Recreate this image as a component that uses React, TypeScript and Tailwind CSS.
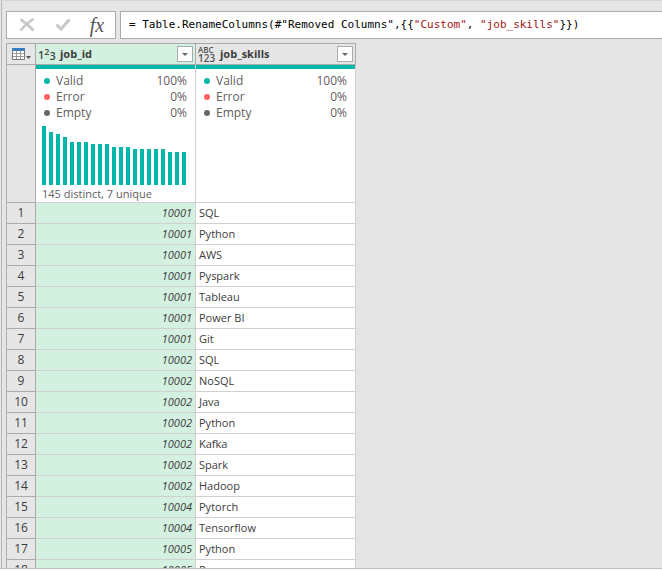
import React from "react";

const profile = [
  { label: "Valid", value: "100%", dot: "bg-[#01b8aa]" },
  { label: "Error", value: "0%", dot: "bg-[#fd625e]" },
  { label: "Empty", value: "0%", dot: "bg-[#666666]" },
];

const bars = [59, 53, 51, 48, 43, 43, 43, 41, 41, 41, 38, 38, 38, 36, 36, 36, 36, 36, 33, 33, 33];

const rows: [number, string][] = [
  [10001, "SQL"],
  [10001, "Python"],
  [10001, "AWS"],
  [10001, "Pyspark"],
  [10001, "Tableau"],
  [10001, "Power BI"],
  [10001, "Git"],
  [10002, "SQL"],
  [10002, "NoSQL"],
  [10002, "Java"],
  [10002, "Python"],
  [10002, "Kafka"],
  [10002, "Spark"],
  [10002, "Hadoop"],
  [10004, "Pytorch"],
  [10004, "Tensorflow"],
  [10005, "Python"],
  [10005, "R"],
];

const formulaParts = [
  { text: '= Table.RenameColumns(#"Removed Columns",{{', color: "text-black" },
  { text: '"Custom"', color: "text-[#a31515]" },
  { text: ", ", color: "text-black" },
  { text: '"job_skills"', color: "text-[#a31515]" },
  { text: "}})", color: "text-black" },
];

function FormulaBar() {
  return (
    <div className="flex h-7 shrink-0 gap-1 pl-1">
      <div className="flex w-[110px] shrink-0 items-center justify-between border border-[#ababab] bg-white pr-2 pl-3">
        <button type="button" aria-label="Cancel" disabled>
          <svg width="16" height="14" viewBox="0 0 16 14" fill="none" stroke="#c8c8c8">
            <path d="M1.5 1.5C6 4 10 8 14.500 12.500" strokeWidth="3" />
            <path d="M14.500 1C9.500 4 5.500 8 1.500 12.500" strokeWidth="2.600" />
          </svg>
        </button>
        <button type="button" aria-label="Apply" disabled className="pl-1">
          <svg width="16" height="14" viewBox="0 0 16 14" fill="none" stroke="#c8c8c8">
            <path d="M1.500 6.500L6 11L14.500 1.500" strokeWidth="3" />
          </svg>
        </button>
        <button
          type="button"
          aria-label="Insert step"
          className="w-5 font-['Liberation_Serif',serif] text-[20px] leading-6 text-[#555555] italic"
        >
          fx
        </button>
      </div>
      <div className="relative min-w-0 grow border border-r-0 border-[#ababab] bg-white font-['DejaVu_Sans_Mono',monospace] text-[11px] leading-[26px]">
        <div aria-hidden="true" className="overflow-hidden pl-2 whitespace-pre">
          {formulaParts.map((part) => (
            <span key={part.text} className={part.color}>
              {part.text}
            </span>
          ))}
        </div>
        <input
          aria-label="Formula"
          defaultValue={formulaParts.map((part) => part.text).join("")}
          spellCheck={false}
          className="absolute inset-0 w-full bg-transparent pl-2 text-transparent caret-black outline-none"
        />
      </div>
    </div>
  );
}

function FilterButton({ column }: { column: string }) {
  return (
    <button
      type="button"
      aria-label={`Filter ${column}`}
      className="flex size-4 shrink-0 items-center justify-center border border-[#ababab] bg-white"
    >
      <svg width="6" height="3" viewBox="0 0 6 3" fill="#666666">
        <path d="M0 0H6L3 3Z" />
      </svg>
    </button>
  );
}

function WholeNumberIcon() {
  return (
    <span className="flex h-5 w-[18px] shrink-0 items-start text-[11px] leading-4 font-semibold text-[#444444]">
      <span className="pt-[3px]">1</span>
      <span className="text-[9px]">2</span>
      <span className="pt-1">3</span>
    </span>
  );
}

function AnyTypeIcon() {
  return (
    <span className="flex w-[18px] shrink-0 flex-col text-left text-[#555555]">
      <span className="text-[8px] leading-[9px] font-semibold">ABC</span>
      <span className="text-[10px] leading-[9px] font-semibold">123</span>
    </span>
  );
}

function ColumnHeader({ name, icon, selected }: { name: string; icon: React.ReactNode; selected?: boolean }) {
  return (
    <th
      scope="col"
      className={`h-[22px] border-y border-r border-[#ababab] p-0 ${selected ? "bg-[#d3f0e0]" : "bg-[#e6e6e6]"}`}
    >
      <div className="flex h-5 items-center gap-1 px-[2px]">
        {icon}
        <span className="grow text-left text-[11px] leading-5 font-bold">{name}</span>
        <FilterButton column={name} />
      </div>
    </th>
  );
}

function ColumnProfile({ distribution }: { distribution?: boolean }) {
  return (
    <td className="h-[138px] border-r border-b border-[#d0d0d0] bg-white p-0 align-top text-[#606060]">
      <div className="h-1 bg-[#01b8aa]" />
      <dl className="px-2 pt-1 text-[12px] leading-4">
        {profile.map((item) => (
          <div key={item.label} className="flex items-center gap-[6px]">
            <span className={`size-[6px] rounded-full ${item.dot}`} />
            <dt className="grow">{item.label}</dt>
            <dd>{item.value}</dd>
          </div>
        ))}
      </dl>
      {distribution && (
        <div className="px-[6px] pt-1">
          <div className="flex h-[60px] items-end gap-[3px]">
            {bars.map((height, i) => (
              <div key={i} className="w-1 bg-[#01b8aa]" style={{ height }} />
            ))}
          </div>
          <p className="text-[11px] leading-[17px]">145 distinct, 7 unique</p>
        </div>
      )}
    </td>
  );
}

export default function App() {
  return (
    <div className="flex h-screen flex-col bg-[#f5f5f5] pb-px font-['Open_Sans','Noto_Sans',sans-serif] text-[#3c3c3c]">
      <div className="min-h-0 grow border-t border-b border-t-[#d6d6d6] border-b-[#c0c0c0] bg-[#e5e5e5] pl-px">
        <main className="flex h-full flex-col overflow-hidden border-l border-[#b8b8b8] pt-[10px]">
          <FormulaBar />
          <div className="min-h-0 grow overflow-hidden pt-1 pl-1">
            <table className="w-[350px] table-fixed border-separate border-spacing-0 border-l border-[#ababab]">
              <colgroup>
                <col className="w-[29px]" />
                <col className="w-[160px]" />
                <col className="w-[160px]" />
              </colgroup>
              <thead>
                <tr>
                  <th className="border-y border-r border-[#ababab] bg-[#e6e6e6] p-0">
                    <button type="button" aria-label="Table options" className="flex h-5 w-full items-center pl-1">
                      <svg width="22" height="14" viewBox="0 0 22 14">
                        <path d="M1.500 1.500H13.500V12.500H1.500Z" fill="#ffffff" stroke="#777777" />
                        <path d="M2 6.500H13M2 9.500H13M5.500 4V12M9.500 4V12" stroke="#999999" />
                        <path d="M1 1H14V4H1Z" fill="#3b7bbf" />
                        <path d="M15 9H20L17.500 12Z" fill="#555555" />
                      </svg>
                    </button>
                  </th>
                  <ColumnHeader name="job_id" icon={<WholeNumberIcon />} selected />
                  <ColumnHeader name="job_skills" icon={<AnyTypeIcon />} />
                </tr>
              </thead>
              <tbody>
                <tr>
                  <td className="border-r border-b border-[#ababab] bg-[#e6e6e6] p-0" />
                  <ColumnProfile distribution />
                  <ColumnProfile />
                </tr>
                {rows.map(([id, skill], i) => (
                  <tr key={i}>
                    <th
                      scope="row"
                      className="h-[21px] border-r border-b border-[#ababab] bg-[#e6e6e6] p-0 text-center text-[12px] leading-5 font-normal"
                    >
                      {i + 1}
                    </th>
                    <td className="border-r border-b border-[#d0d0d0] bg-[#d3f0e0] p-0 pr-[3px] text-right text-[11px] leading-5 italic">
                      {id}
                    </td>
                    <td className="border-r border-b border-[#d0d0d0] bg-white p-0 pl-[3px] text-[11px] leading-5">
                      {skill}
                    </td>
                  </tr>
                ))}
              </tbody>
            </table>
          </div>
        </main>
      </div>
    </div>
  );
}
